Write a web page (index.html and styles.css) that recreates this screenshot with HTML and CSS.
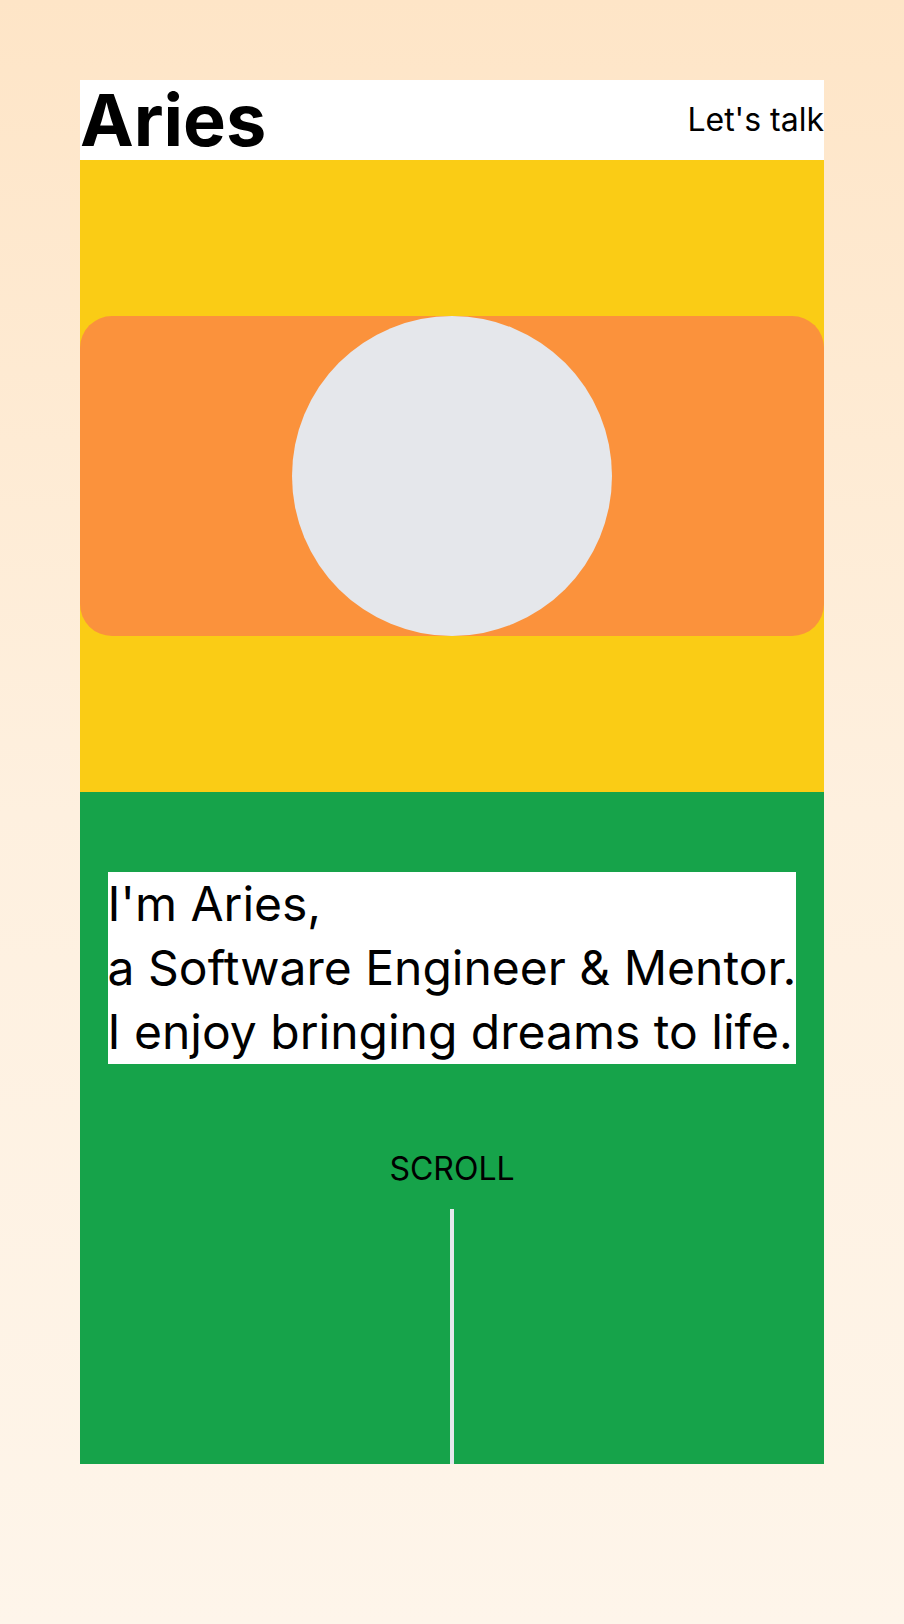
FILE: index.html
```html
<!DOCTYPE html>
<html lang="en">
<head>
<meta charset="utf-8">
<title>Aries</title>
<link rel="stylesheet" href="styles.css">
</head>
<body>
<main class="page">
  <header class="header">
    <h1 class="logo">Aries</h1>
    <a class="talk" href="#">Let's talk</a>
  </header>
  <section class="hero">
    <div class="card">
      <div class="avatar"></div>
    </div>
  </section>
  <section class="intro">
    <p class="intro-text">I'm Aries,<br>a Software Engineer &amp; Mentor.<br>I enjoy bringing dreams to life.</p>
    <div class="scroll">SCROLL</div>
    <div class="scroll-line"></div>
  </section>
</main>
</body>
</html>
```
FILE: styles.css
```css
html, body {
  margin: 0;
  padding: 0;
  min-height: 100vh;
}
body {
  background: linear-gradient(to bottom, #fee5c7 0%, #fef0df 50%, #fef5ea 100%);
  font-family: Inter, "Noto Sans", sans-serif;
  color: #000;
  padding: 80px;
  box-sizing: border-box;
}
.page {
  width: 744px;
}
.header {
  height: 80px;
  background: #fff;
  display: flex;
  align-items: center;
  justify-content: space-between;
}
.logo {
  margin: 0;
  font-size: 72px;
  line-height: 72px;
  font-weight: 700;
}
.talk {
  font-size: 32px;
  line-height: 36px;
  color: #000;
  text-decoration: none;
}
.hero {
  background: #facc15;
  padding: 156px 0;
}
.card {
  height: 320px;
  background: #fb923c;
  border-radius: 32px;
  display: flex;
  justify-content: center;
}
.avatar {
  width: 320px;
  height: 320px;
  border-radius: 50%;
  background: #e5e7eb;
}
.intro {
  background: #16a34a;
  height: 672px;
  padding-top: 80px;
  box-sizing: border-box;
  display: flex;
  flex-direction: column;
  align-items: center;
}
.intro-text {
  margin: 0;
  background: #fff;
  font-size: 48px;
  line-height: 64px;
  width: fit-content;
}
.scroll {
  margin-top: 87px;
  font-size: 32px;
  line-height: 36px;
}
.scroll-line {
  margin-top: 22px;
  width: 4px;
  height: 256px;
  background: #e5e7eb;
}
```
